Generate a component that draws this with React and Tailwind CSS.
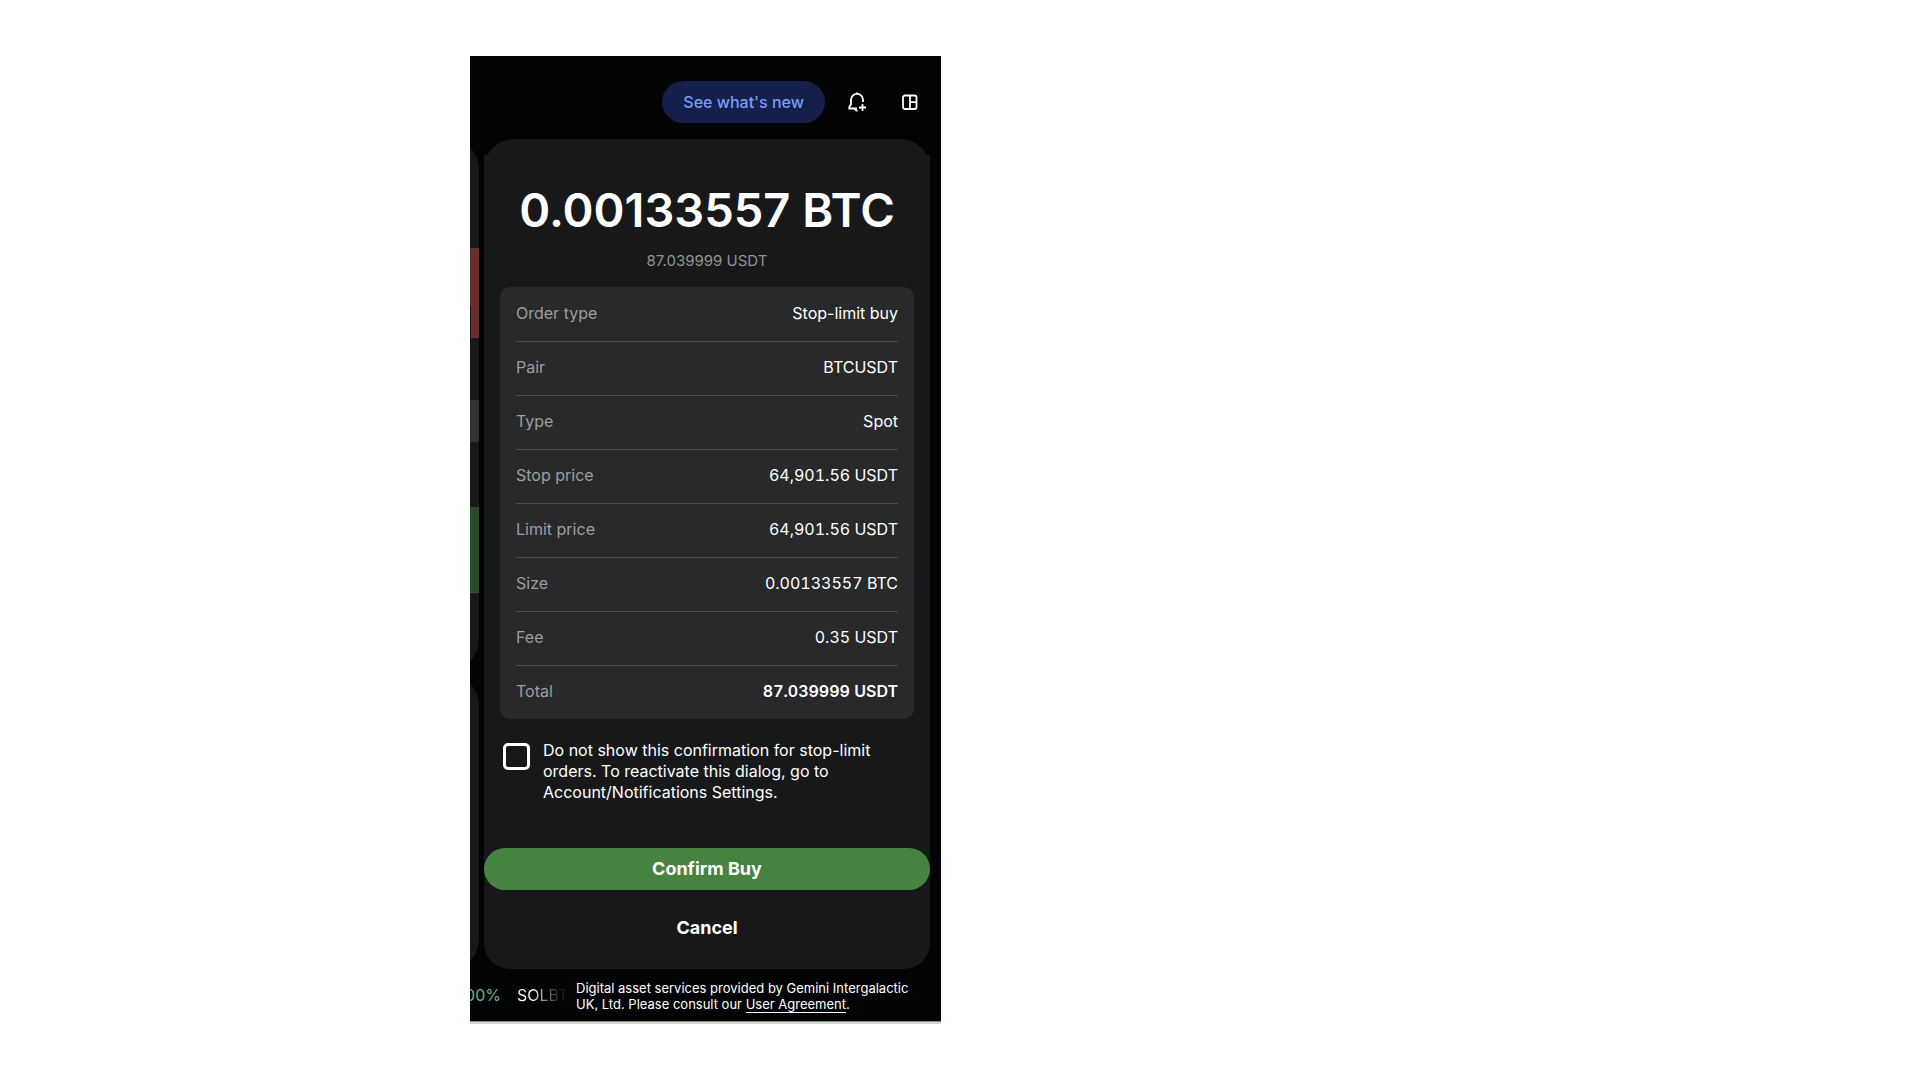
import React, { useState } from 'react';

const orderDetails = [
  { label: 'Order type', value: 'Stop-limit buy' },
  { label: 'Pair', value: 'BTCUSDT' },
  { label: 'Type', value: 'Spot' },
  { label: 'Stop price', value: '64,901.56 USDT', numeric: true },
  { label: 'Limit price', value: '64,901.56 USDT', numeric: true },
  { label: 'Size', value: '0.00133557 BTC', numeric: true },
  { label: 'Fee', value: '0.35 USDT', numeric: true },
  { label: 'Total', value: '87.039999 USDT', numeric: true, strong: true },
];

function BellPlusIcon() {
  return (
    <svg className="w-6 h-6" viewBox="0 0 24 24" fill="none" stroke="currentColor" strokeWidth="1.8">
      <path d="M18 12V9.800a6 6 0 0 0-12 0v4.500L4.300 17v1.500H12" />
      <path d="M10 18.500c.1 1.500 1 2.200 2.600 2.300" />
      <path d="M17.500 14v7M14 17.500h7" />
      <path d="M12 2.500v1.500" />
    </svg>
  );
}

function LayoutIcon() {
  return (
    <svg className="w-6 h-6" viewBox="0 0 24 24" fill="none" stroke="currentColor" strokeWidth="1.8">
      <rect x="5" y="5.500" width="13.500" height="13.500" rx="2" />
      <path d="M12 5.500v13.500M12 12.200h6.500" />
    </svg>
  );
}

function Header() {
  return (
    <header className="flex items-center justify-end gap-[11px] pt-[25px] pb-4 pr-[10px]">
      <button className="h-[42px] px-[21px] rounded-full bg-[#14204b] text-[#7b9cf5] text-base font-medium">
        See what's new
      </button>
      <button aria-label="Add alert" className="w-[42px] h-[42px] flex items-center justify-center text-white">
        <BellPlusIcon />
      </button>
      <button aria-label="Change layout" className="w-[42px] h-[42px] flex items-center justify-center text-white">
        <LayoutIcon />
      </button>
    </header>
  );
}

// Edge of the order book that stays visible beside the dialog
function BookEdge() {
  return (
    <div className="w-[9px] shrink-0 flex flex-col items-end gap-[5px] overflow-hidden">
      <div className="w-20 h-[531px] shrink-0 rounded-[30px] bg-[#17181a] overflow-hidden">
        <div className="mt-[109px] h-[58px] border-t border-[#4a4040] bg-[#662f2e]" />
        <div className="h-8 ml-[72px] bg-[#662f2e]" />
        <div className="mt-[62px] h-[42px] bg-[#303133]" />
        <div className="mt-[65px] h-[86px] border-b border-[#444b44] bg-[#2c4a2b]" />
      </div>
      <div className="w-20 flex-1 rounded-[30px] bg-[#17181a]" />
    </div>
  );
}

function OrderTable() {
  return (
    <div className="mx-4 px-4 rounded-[10px] bg-[#28292b]">
      <table className="w-full border-collapse text-base">
        <tbody>
          {orderDetails.map((row) => (
            <tr key={row.label} className="h-[54px] border-b border-[#4d4e50] last:border-b-0">
              <th scope="row" className="pb-[2px] text-left font-normal text-[#9d9ea0]">
                {row.label}
              </th>
              <td
                className={`pb-[2px] text-right text-white ${row.numeric ? 'tabular-nums' : ''} ${
                  row.strong ? 'font-semibold' : 'font-normal'
                }`}
              >
                {row.value}
              </td>
            </tr>
          ))}
        </tbody>
      </table>
    </div>
  );
}

function ConfirmDialog() {
  const [skipConfirm, setSkipConfirm] = useState(false);

  return (
    <section className="flex-1 min-w-0">
      <div className="h-4 overflow-hidden">
        <div className="h-20 rounded-[30px] bg-[#17181a]" />
      </div>
      <div className="flex flex-col rounded-b-[26px] bg-[#17181a]">
        <h1 className="pt-[26px] text-center text-[47px] leading-[58px] font-semibold text-white whitespace-nowrap">
          0.00133557 BTC
        </h1>
        <p className="pt-[10px] pb-[14px] text-center text-[15px] leading-6 text-[#939496]">
          87.039999 USDT
        </p>
        <OrderTable />
        <div className="flex items-start gap-[13px] pt-[21px] pl-[19px] pr-10">
          <input
            id="skip-confirm"
            type="checkbox"
            checked={skipConfirm}
            onChange={(e) => setSkipConfirm(e.target.checked)}
            className="mt-[3px] w-[27px] h-[27px] shrink-0 appearance-none rounded-[5px] border-3 border-white checked:bg-[#478340]"
          />
          <label htmlFor="skip-confirm" className="text-base leading-[21px] text-white">
            Do not show this confirmation for stop-limit orders. To reactivate this dialog, go to
            Account/Notifications Settings.
          </label>
        </div>
        <button className="mt-[45px] h-[42px] rounded-full bg-[#478340] text-white text-lg font-bold">
          Confirm Buy
        </button>
        <button className="mt-4 mb-5 h-[43px] rounded-full text-white text-lg font-bold">
          Cancel
        </button>
      </div>
    </section>
  );
}

function Footer() {
  return (
    <footer className="flex items-center h-[53px] border-b border-[#8a8d90]">
      <div className="w-[95px] shrink-0 flex justify-end gap-4 overflow-hidden whitespace-nowrap text-base">
        <span className="text-[#72b077]">0.00%</span>
        <span className="w-12 shrink-0 overflow-hidden bg-linear-to-r from-white from-30% to-[#1a1b1c] to-90% bg-clip-text text-transparent">
          SOLBT
        </span>
      </div>
      <p className="pl-[11px] pt-px text-[13px] leading-4 text-white">
        Digital asset services provided by Gemini Intergalactic
        <br />
        UK, Ltd. Please consult our{' '}
        <a href="#agreement" className="border-b border-white">User Agreement</a>.
      </p>
    </footer>
  );
}

function App() {
  return (
    <div className="min-h-screen bg-white pt-14 pl-[470px] font-['Inter',sans-serif]">
      <main className="w-full max-w-[471px] overflow-hidden bg-[#020304] border-b-2 border-[#cfd8cd]">
        <Header />
        <div className="flex gap-[5px] pr-[11px]">
          <BookEdge />
          <ConfirmDialog />
        </div>
        <Footer />
      </main>
    </div>
  );
}

export default App;
